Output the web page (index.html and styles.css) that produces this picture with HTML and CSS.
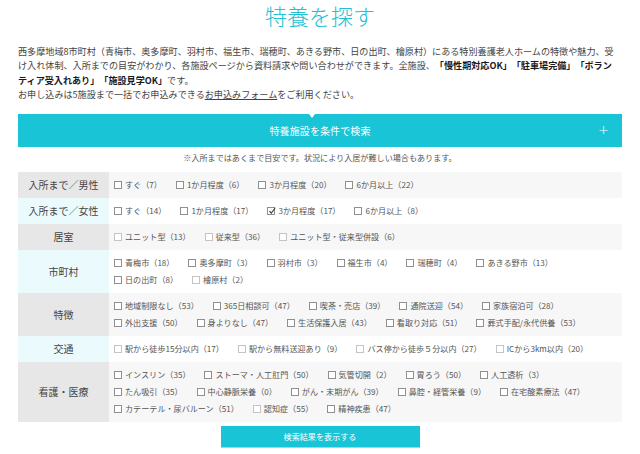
FILE: index.html
```html
<!DOCTYPE html>
<html lang="ja">
<head>
<meta charset="utf-8">
<title>特養を探す</title>
<link rel="stylesheet" href="styles.css">
</head>
<body>
<h1 class="title">特養を探す</h1>
<p class="lead">西多摩地域8市町村（青梅市、奥多摩町、羽村市、福生市、瑞穂町、あきる野市、日の出町、檜原村）にある特別養護老人ホームの特徴や魅力、受け入れ体制、入所までの目安がわかり、各施設ページから資料請求や問い合わせができます。全施設、<b>「慢性期対応OK」「駐車場完備」「ボランティア受入れあり」「施設見学OK」</b>です。<br>お申し込みは5施設まで一括でお申込みできる<a href="#" class="link">お申込みフォーム</a>をご利用ください。</p>

<div class="search-bar"><span class="search-title">特養施設を条件で検索</span><span class="plus">+</span></div>
<p class="note">※入所まではあくまで目安です。状況により入居が難しい場合もあります。</p>

<div class="table">
  <div class="row odd">
    <div class="label">入所まで／男性</div>
    <div class="opts">
      <label class="opt"><span class="cb"></span>すぐ（7）</label>
      <label class="opt"><span class="cb"></span>1か月程度（6）</label>
      <label class="opt"><span class="cb"></span>3か月程度（20）</label>
      <label class="opt"><span class="cb"></span>6か月以上（22）</label>
    </div>
  </div>
  <div class="row even">
    <div class="label">入所まで／女性</div>
    <div class="opts">
      <label class="opt"><span class="cb"></span>すぐ（14）</label>
      <label class="opt"><span class="cb"></span>1か月程度（17）</label>
      <label class="opt"><span class="cb checked"><svg viewBox="0 0 8 8" width="8" height="8"><path d="M1.5 4.2 L3.3 6.2 L7.2 0.8" fill="none" stroke="#333" stroke-width="1.1"/></svg></span>3か月程度（17）</label>
      <label class="opt"><span class="cb"></span>6か月以上（8）</label>
    </div>
  </div>
  <div class="row odd">
    <div class="label">居室</div>
    <div class="opts">
      <label class="opt"><span class="cb light"></span>ユニット型（13）</label>
      <label class="opt"><span class="cb light"></span>従来型（36）</label>
      <label class="opt"><span class="cb light"></span>ユニット型・従来型併設（6）</label>
    </div>
  </div>
  <div class="row even">
    <div class="label">市町村</div>
    <div class="opts">
      <label class="opt"><span class="cb"></span>青梅市（18）</label>
      <label class="opt"><span class="cb"></span>奥多摩町（3）</label>
      <label class="opt"><span class="cb"></span>羽村市（3）</label>
      <label class="opt"><span class="cb"></span>福生市（4）</label>
      <label class="opt"><span class="cb"></span>瑞穂町（4）</label>
      <label class="opt"><span class="cb"></span>あきる野市（13）</label>
      <label class="opt"><span class="cb"></span>日の出町（8）</label>
      <label class="opt"><span class="cb light"></span>檜原村（2）</label>
    </div>
  </div>
  <div class="row odd">
    <div class="label">特徴</div>
    <div class="opts">
      <label class="opt"><span class="cb"></span>地域制限なし（53）</label>
      <label class="opt"><span class="cb"></span>365日相談可（47）</label>
      <label class="opt"><span class="cb"></span>喫茶・売店（39）</label>
      <label class="opt"><span class="cb"></span>通院送迎（54）</label>
      <label class="opt"><span class="cb"></span>家族宿泊可（28）</label>
      <label class="opt"><span class="cb"></span>外出支援（50）</label>
      <label class="opt"><span class="cb"></span>身よりなし（47）</label>
      <label class="opt"><span class="cb"></span>生活保護入居（43）</label>
      <label class="opt"><span class="cb"></span>看取り対応（51）</label>
      <label class="opt"><span class="cb"></span>葬式手配/永代供養（53）</label>
    </div>
  </div>
  <div class="row even">
    <div class="label">交通</div>
    <div class="opts">
      <label class="opt"><span class="cb light"></span>駅から徒歩15分以内（17）</label>
      <label class="opt"><span class="cb light"></span>駅から無料送迎あり（9）</label>
      <label class="opt"><span class="cb light"></span>バス停から徒歩５分以内（27）</label>
      <label class="opt"><span class="cb light"></span>ICから3km以内（20）</label>
    </div>
  </div>
  <div class="row odd">
    <div class="label">看護・医療</div>
    <div class="opts">
      <label class="opt"><span class="cb"></span>インスリン（35）</label>
      <label class="opt"><span class="cb"></span>ストーマ・人工肛門（50）</label>
      <label class="opt"><span class="cb"></span>気管切開（2）</label>
      <label class="opt"><span class="cb"></span>胃ろう（50）</label>
      <label class="opt"><span class="cb"></span>人工透析（3）</label>
      <label class="opt"><span class="cb"></span>たん吸引（35）</label>
      <label class="opt"><span class="cb"></span>中心静脈栄養（0）</label>
      <label class="opt"><span class="cb"></span>がん・末期がん（39）</label>
      <label class="opt"><span class="cb"></span>鼻腔・経管栄養（9）</label>
      <label class="opt"><span class="cb"></span>在宅酸素療法（47）</label>
      <label class="opt"><span class="cb"></span>カテーテル・尿バルーン（51）</label>
      <label class="opt"><span class="cb light"></span>認知症（55）</label>
      <label class="opt"><span class="cb"></span>精神疾患（47）</label>
    </div>
  </div>
</div>

<div class="actions"><button class="submit" type="button">検索結果を表示する</button></div>
</body>
</html>
```
FILE: styles.css
```css
* { box-sizing: border-box; }
body {
  margin: 0;
  background: #fff;
  font-family: "Noto Sans CJK JP", "Noto Sans", sans-serif;
  color: #444;
  text-spacing-trim: space-all;
}
.title {
  margin: 0;
  text-align: center;
  font-size: 22px;
  font-weight: 300;
  line-height: 30px;
  color: #22c1d5;
}
.lead {
  margin: 14px 0 0;
  padding: 0 20px 0 18px;
  font-size: 9.1px;
  line-height: 14.4px;
  color: #444;
  line-break: strict;
}
.lead b { color: #1a1a1a; font-weight: 700; }
.link { color: #444; text-decoration: underline; }
.search-bar {
  position: relative;
  margin: 12px 18px 0;
  height: 33px;
  background: #18c4d6;
  color: #fff;
  display: flex;
  align-items: center;
  justify-content: center;
}
.search-bar::before {
  content: "";
  position: absolute;
  top: 0;
  left: 291px;
  border-left: 3.5px solid transparent;
  border-right: 3.5px solid transparent;
  border-top: 4px solid #fff;
}
.search-title { font-size: 10px; letter-spacing: 0.1px; }
.plus {
  position: absolute;
  right: 13px;
  top: 8px;
  font-size: 13px;
  line-height: 15px;
  font-family: "DejaVu Sans", sans-serif;
  font-weight: 300;
}
.note {
  margin: 4px 0 7px;
  text-align: center;
  font-size: 8.1px;
  line-height: 14px;
  color: #555;
}
.table { margin: 0 18px; }
.row { display: flex; }
.label {
  flex: 0 0 91px;
  display: flex;
  align-items: center;
  justify-content: center;
  font-size: 10px;
  color: #444;
}
.odd .label { background: #e7e7e7; }
.even .label { background: #eafafd; }
.odd .opts { background: #f7f7f7; }
.even .opts { background: #fff; }
.opts {
  flex: 1;
  display: flex;
  flex-wrap: wrap;
  padding: 4.5px 8px 4.5px 5px;
}
.opt {
  display: inline-flex;
  align-items: center;
  gap: 3px;
  height: 17px;
  margin-right: 14px;
  font-size: 8.1px;
  color: #555;
  white-space: nowrap;
}
.cb {
  width: 8px;
  height: 8px;
  border: 1px solid #8f8f8f;
  background: #fff;
  display: inline-block;
  position: relative;
}
.cb.light { border-color: #c4c4c4; }
.cb svg { position: absolute; left: 0; top: -1px; }
.actions {
  display: flex;
  justify-content: center;
  margin-top: 4px;
}
.submit {
  width: 199px;
  height: 22px;
  border: none;
  border-bottom: 1px solid #8fdfe8;
  background: #18c4d6;
  color: #fff;
  font-family: "Noto Sans CJK JP", sans-serif;
  font-size: 8.1px;
  padding: 0;
}
```
